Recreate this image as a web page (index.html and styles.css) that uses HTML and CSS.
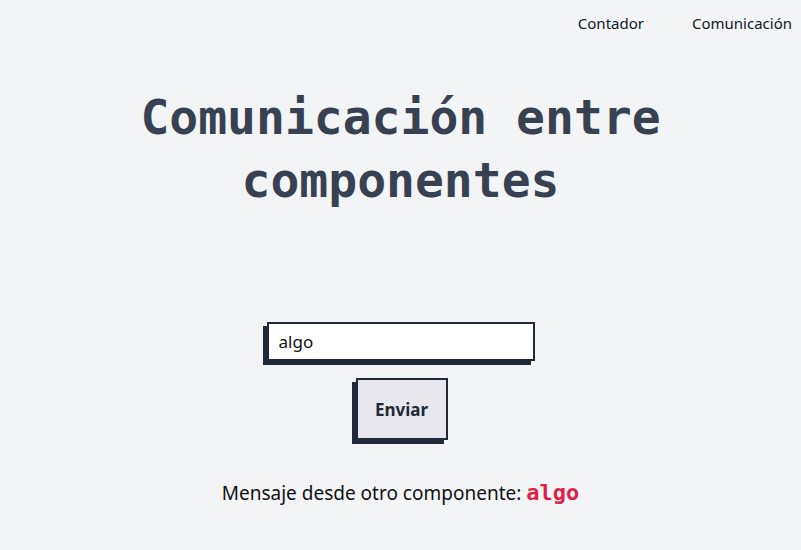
FILE: index.html
```html
<!DOCTYPE html>
<html lang="es">
<head>
<meta charset="utf-8">
<link rel="stylesheet" href="styles.css">
</head>
<body>
<nav class="nav">
  <a class="nav-link" href="#">Contador</a>
  <a class="nav-link" href="#">Comunicación</a>
</nav>
<main class="main">
  <h1 class="title">Comunicación entre componentes</h1>
  <form class="form">
    <input class="field" type="text" value="algo">
    <button class="btn" type="button">Enviar</button>
  </form>
  <p class="message">Mensaje desde otro componente: <span class="msg-value">algo</span></p>
</main>
</body>
</html>
```
FILE: styles.css
```css
* { box-sizing: border-box; }
html, body { margin: 0; padding: 0; }
body {
  background: #f3f4f6;
  font-family: "Noto Sans", "Inter", sans-serif;
  color: #111827;
  width: 801px;
  height: 550px;
  overflow: hidden;
}
.nav {
  display: flex;
  justify-content: flex-end;
  gap: 48px;
  padding: 12px 9px 0 0;
  height: 48px;
}
.nav-link {
  color: #111827;
  text-decoration: none;
  font-size: 15px;
  line-height: 22px;
}
.main {
  display: flex;
  flex-direction: column;
  align-items: center;
}
.title {
  font-family: "DejaVu Sans Mono", monospace;
  font-weight: 700;
  font-size: 48px;
  line-height: 63px;
  color: #374151;
  text-align: center;
  margin: 38px 0 0;
  width: 560px;
}
.form {
  display: flex;
  flex-direction: column;
  align-items: center;
  gap: 17px;
  margin-top: 110px;
}
.field {
  width: 268px;
  height: 39px;
  border: 2px solid #1f2937;
  background: #fff;
  box-shadow: -4px 4px 0 #1f2937;
  font-family: "Noto Sans", sans-serif;
  font-size: 17px;
  padding: 0 10px;
  color: #111;
  outline: none;
}
.btn {
  width: 92px;
  height: 62px;
  border: 2px solid #1f2937;
  background: #e8e7ee;
  box-shadow: -4px 4px 0 #1f2937;
  font-family: "Noto Sans", sans-serif;
  font-weight: 700;
  font-size: 17px;
  color: #1f2937;
  margin-left: 2px;
}
.message {
  margin: 40px 0 0;
  font-size: 19px;
  color: #111;
}
.msg-value {
  font-family: "DejaVu Sans Mono", monospace;
  font-weight: 700;
  font-size: 22px;
  color: #e11d48;
}
```
